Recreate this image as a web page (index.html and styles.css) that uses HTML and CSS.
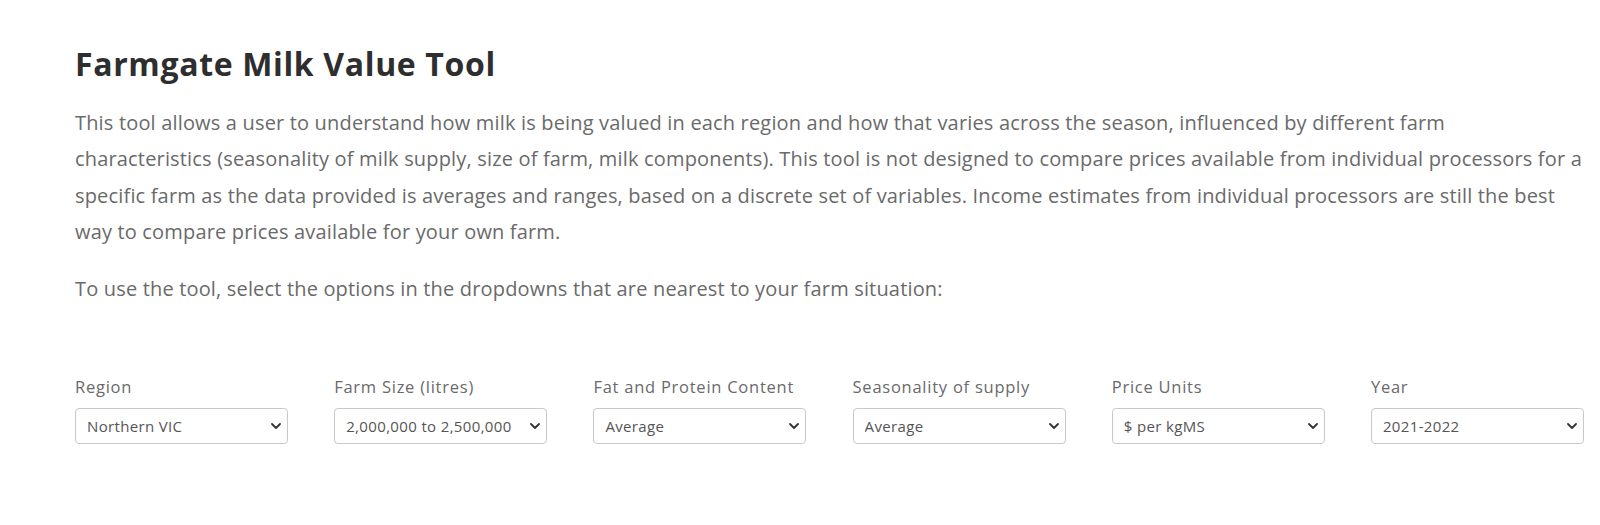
FILE: index.html
```html
<!DOCTYPE html>
<html lang="en">
<head>
<meta charset="utf-8">
<title>Farmgate Milk Value Tool</title>
<link rel="stylesheet" href="styles.css">
</head>
<body>
<main class="page">
  <h1 class="title">Farmgate Milk Value Tool</h1>
  <p class="intro">This tool allows a user to understand how milk is being valued in each region and how that varies across the season, influenced by different farm characteristics (seasonality of milk supply, size of farm, milk components). This tool is not designed to compare prices available from individual processors for a specific farm as the data provided is averages and ranges, based on a discrete set of variables. Income estimates from individual processors are still the best way to compare prices available for your own farm.</p>
  <p class="intro">To use the tool, select the options in the dropdowns that are nearest to your farm situation:</p>

  <form class="filters">
    <label class="field">
      <span class="field-label">Region</span>
      <select class="field-select"><option>Northern VIC</option></select>
    </label>
    <label class="field">
      <span class="field-label">Farm Size (litres)</span>
      <select class="field-select"><option>2,000,000 to 2,500,000</option></select>
    </label>
    <label class="field">
      <span class="field-label">Fat and Protein Content</span>
      <select class="field-select"><option>Average</option></select>
    </label>
    <label class="field">
      <span class="field-label">Seasonality of supply</span>
      <select class="field-select"><option>Average</option></select>
    </label>
    <label class="field">
      <span class="field-label">Price Units</span>
      <select class="field-select"><option>$ per kgMS</option></select>
    </label>
    <label class="field">
      <span class="field-label">Year</span>
      <select class="field-select"><option>2021-2022</option></select>
    </label>
  </form>
</main>
</body>
</html>
```
FILE: styles.css
```css
html, body {
  margin: 0;
  padding: 0;
  background: #ffffff;
}

.page {
  padding: 0 15px 0 75px;
  font-family: "Open Sans", Lato, sans-serif;
}

.title {
  margin: 43px 0 0;
  font-size: 32px;
  line-height: 42px;
  font-weight: 700;
  letter-spacing: 0.65px;
  color: #2e2e2e;
}

.intro {
  margin: 20px 0 0;
  font-size: 20px;
  line-height: 36.4px;
  letter-spacing: 0.17px;
  color: #6a6a6a;
}

.intro + .intro {
  margin-top: 20px;
}

.filters {
  display: grid;
  grid-template-columns: repeat(6, 213px);
  column-gap: 46.2px;
  margin-top: 70px;
}

.field {
  display: flex;
  flex-direction: column;
  gap: 11px;
}

.field-label {
  font-size: 16.5px;
  line-height: 20px;
  letter-spacing: 0.75px;
  color: #6a6a6a;
}

.field-select {
  appearance: none;
  -webkit-appearance: none;
  width: 100%;
  height: 36px;
  margin: 0;
  padding: 0 28px 0 11px;
  border: 1px solid #c9c9c9;
  border-radius: 4px;
  background-color: #fff;
  background-image: url("data:image/svg+xml,%3Csvg xmlns='http://www.w3.org/2000/svg' width='10' height='6' viewBox='0 0 10 6'%3E%3Cpath d='M1 1l4 4 4-4' fill='none' stroke='%23333' stroke-width='1.8' stroke-linecap='round' stroke-linejoin='round'/%3E%3C/svg%3E");
  background-repeat: no-repeat;
  background-position: right 6px center;
  background-size: 10px 6px;
  font-family: "Open Sans", Lato, sans-serif;
  font-size: 15px;
  letter-spacing: 0.35px;
  color: #555;
}
```
